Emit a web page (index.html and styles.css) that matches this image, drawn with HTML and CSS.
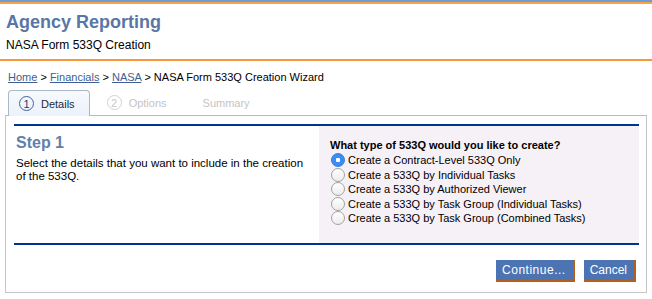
FILE: index.html
```html
<!DOCTYPE html>
<html lang="en">
<head>
    <meta charset="UTF-8">
    <title>Agency Reporting - NASA Form 533Q Creation</title>
    <link rel="stylesheet" href="styles.css">
</head>
<body>
    <div class="topbar"></div>
    <div class="header">
        <h1 class="title">Agency Reporting</h1>
        <div class="subtitle">NASA Form 533Q Creation</div>
    </div>

    <div class="breadcrumb">
        <a href="#">Home</a> &gt; <a href="#">Financials</a> &gt; <a href="#">NASA</a> &gt; NASA Form 533Q Creation Wizard
    </div>

    <div class="tabs">
        <div class="tab active"><span class="num">1</span>Details</div>
        <div class="tab disabled"><span class="num">2</span>Options</div>
        <div class="tab disabled plain">Summary</div>
    </div>

    <div class="panel">
        <div class="step">
            <div class="step-info">
                <h2>Step 1</h2>
                <p>Select the details that you want to include in the creation of the 533Q.</p>
            </div>
            <div class="step-choices">
                <div class="question">What type of 533Q would you like to create?</div>
                <label class="option"><input type="radio" name="type" checked>Create a Contract-Level 533Q Only</label>
                <label class="option"><input type="radio" name="type">Create a 533Q by Individual Tasks</label>
                <label class="option"><input type="radio" name="type">Create a 533Q by Authorized Viewer</label>
                <label class="option"><input type="radio" name="type">Create a 533Q by Task Group (Individual Tasks)</label>
                <label class="option"><input type="radio" name="type">Create a 533Q by Task Group (Combined Tasks)</label>
            </div>
        </div>
        <div class="actions">
            <button type="button" class="btn btn-continue">Continue...</button>
            <button type="button" class="btn">Cancel</button>
        </div>
    </div>
</body>
</html>
```

FILE: styles.css
```css
body {
    font-family: "Liberation Sans", Arial, sans-serif;
    font-size: 11px;
    color: #000;
    margin: 0;
    padding: 0;
    background: #fff;
}
.topbar {
    height: 2px;
    background-color: #6e9bd1;
    border-bottom: 2px solid #f7a34a;
}
.header {
    padding: 6px 6px 6px;
    border-bottom: 2px solid #f7963a;
}
.title {
    margin: 0;
    font-size: 18px;
    line-height: 24px;
    color: #5876a6;
}
.subtitle {
    font-size: 12px;
    line-height: 16px;
    margin-top: 3px;
}
.breadcrumb {
    padding: 9px 8px 0;
    line-height: 14px;
}
.breadcrumb a {
    color: #3d5f93;
}
.tabs {
    display: flex;
    gap: 7px;
    margin: 6px 0 0 8px;
    height: 25px;
}
.tab {
    display: flex;
    align-items: center;
    gap: 7px;
    padding: 0 14px 0 10px;
    font-size: 11px;
    color: #1a2a40;
}
.tab.active {
    background: linear-gradient(#f7fafd, #ebf2fa);
    border: 1px solid #a9b7c6;
    border-bottom: none;
    border-radius: 4px 4px 0 0;
    margin-bottom: -1px;
    position: relative;
    z-index: 1;
}
.tab.disabled {
    color: #c4c4c4;
}
.tab.plain {
    padding-left: 15px;
}
.num {
    width: 13px;
    height: 13px;
    border: 1px solid #3f63a0;
    border-radius: 50%;
    display: flex;
    align-items: center;
    justify-content: center;
    font-size: 11px;
    color: #1f3a68;
}
.tab.disabled .num {
    border-color: #d2d2d2;
    color: #c8c8c8;
}
.panel {
    box-sizing: border-box;
    margin: 0 5px;
    height: 178px;
    border: 1px solid #c6c6c6;
    border-top-color: #b3bbc4;
    padding: 8px 7px 0 8px;
}
.step {
    display: flex;
    border-top: 2px solid #00358f;
    border-bottom: 2px solid #00358f;
}
.step-info {
    width: 291px;
    padding: 0 12px 0 2px;
}
.step-info h2 {
    margin: 8px 0 0;
    font-size: 16px;
    line-height: 18px;
    color: #5f7fae;
}
.step-info p {
    margin: 5px 0 0;
    font-size: 11.5px;
    line-height: 13px;
}
.step-choices {
    flex: 1;
    background-color: #f6f1f6;
    padding: 11px 11px 17px;
}
.question {
    font-weight: bold;
    line-height: 16px;
}
.option {
    display: flex;
    align-items: center;
    height: 14.5px;
}
.option input {
    appearance: none;
    width: 14px;
    height: 14px;
    margin: 0 3px 0 1px;
    border: 1px solid #a2a2a2;
    border-radius: 50%;
    background: linear-gradient(#ffffff, #ececec);
}
.option input:checked {
    border-color: #2f7de0;
    background: radial-gradient(circle, #fff 0 2px, #3b8ef0 2.5px);
}
.actions {
    display: flex;
    justify-content: flex-end;
    gap: 9px;
    padding: 15px 3px 0 0;
}
.btn {
    font-family: "Liberation Sans", Arial, sans-serif;
    font-size: 12px;
    color: #fff;
    background-color: #4d74b2;
    border: none;
    border-right: 2px solid #b4601c;
    border-bottom: 2px solid #b4601c;
    height: 22px;
    padding: 0 7px 0 6px;
    cursor: pointer;
}
.btn-continue {
    letter-spacing: 0.5px;
}
```
